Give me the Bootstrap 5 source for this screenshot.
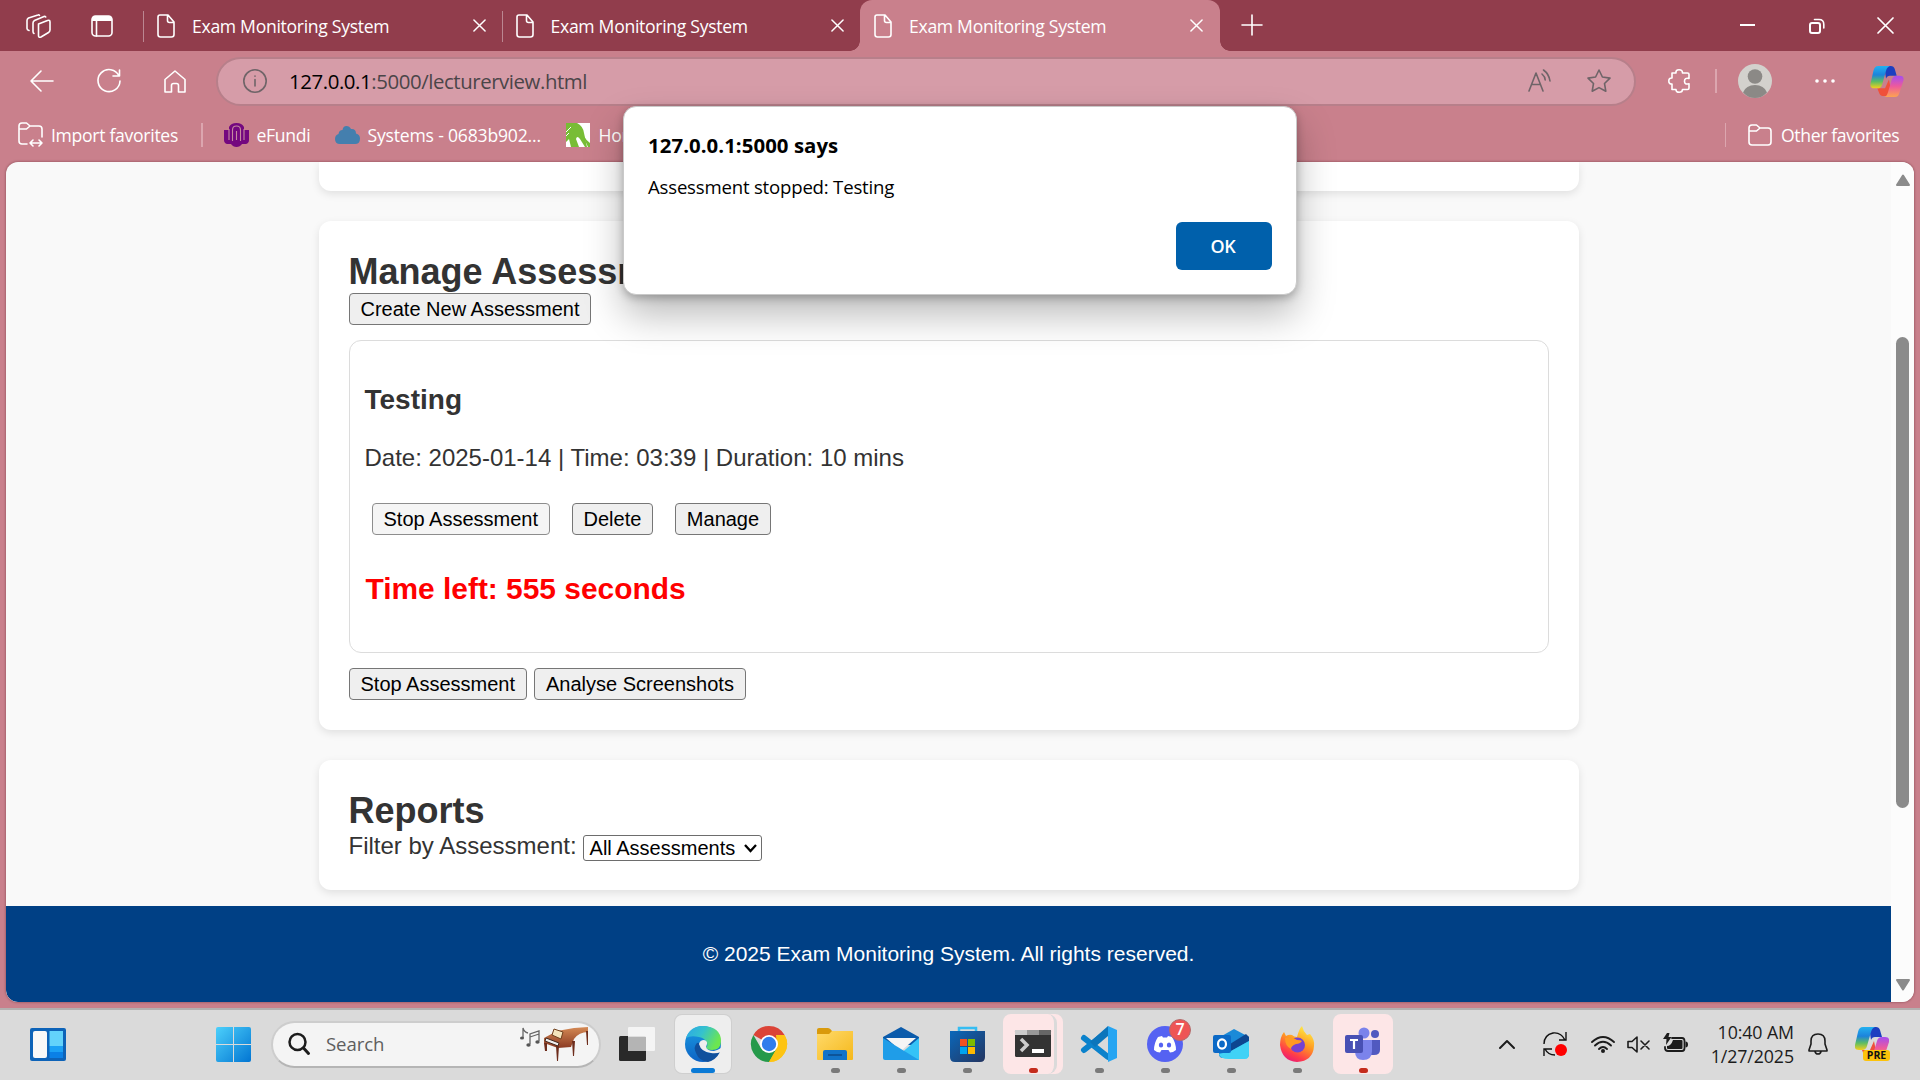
<!DOCTYPE html>
<html lang="en">
<head>
<meta charset="utf-8">
<title>Exam Monitoring System</title>
<link rel="stylesheet" href="https://cdn.jsdelivr.net/npm/bootstrap@5.3.0/dist/css/bootstrap.min.css">
<style>
body{width:1920px;height:1080px;overflow:hidden;background:#c9808c;font-family:"Open Sans","Noto Sans",sans-serif;color:#fff}
svg{display:block;flex:none;overflow:visible}
.ln{fill:none;stroke:currentColor;stroke-width:1.6;stroke-linecap:round;stroke-linejoin:round}
.ui{font-size:17.6px;letter-spacing:-.3px;white-space:nowrap;line-height:24px}
/* tab strip */
.tabstrip{height:51px;background:#913d4c}
.tab-tools{width:143px;padding-left:26px;gap:40px}
.btab{width:358.5px;padding:0 16px 0 13px;border-left:1.5px solid #b78790;border-image:linear-gradient(transparent 23%,#bb8791 23%,#bb8791 81%,transparent 81%) 1}
.btab .ui{margin-left:17px;flex:1}
.btab.current{width:360px;border:0;border-radius:12px 12px 0 0;background:#c9808c;padding:0 17px 0 14px;position:relative}
.btab.current:before,.btab.current:after{content:"";position:absolute;bottom:0;width:10px;height:10px}
.btab.current:before{left:-10px;background:radial-gradient(circle at 0 0,transparent 9.5px,#c9808c 10px)}
.btab.current:after{right:-10px;background:radial-gradient(circle at 100% 0,transparent 9.5px,#c9808c 10px)}
.newtab{margin:-2px 0 0 22px}
.win-tools{padding-right:27px;gap:53px}
/* address row */
.toolrow{height:60px;padding-left:30px}
.navicons{width:186px;gap:43px}
.address{width:1420px;height:49px;border-radius:25px;background:#d69ca8;border:2px solid #b77f8a;color:#6f6468;padding:0 23px 0 25px}
.url{font-size:20.4px;letter-spacing:-.42px;margin-left:22px;color:#4b4548}
.url b{font-weight:400;color:#000}
.vsep{width:1.5px;height:24px;background:#dca6af}
/* favourites */
.favrow{height:51px;padding:0 21px 4px 18px}
/* page */
.viewport{height:840px;margin:0 6px;border-radius:12px;background:#f9f9f9;box-shadow:0 0 2px 1px rgba(120,60,70,.4);font-family:"Liberation Sans",Arial,sans-serif;color:#333;font-size:24px}
.pagecol{width:1885px}
.panel{width:1260px;margin:0 auto 30px;background:#fff;border-radius:12px;box-shadow:0 3px 9px rgba(0,0,0,.1);padding:30px}
.panel.top-end{height:29px;padding:0;border-radius:0 0 12px 12px}
.panel h2{font-size:36px;font-weight:700;line-height:42px;margin:0}
.nbtn{display:inline-flex;align-items:center;justify-content:center;height:32px;font:20px/22px "Liberation Sans",Arial,sans-serif;color:#000;background:#efefef;border:1.5px solid #767676;border-radius:4px;padding:0 11px;white-space:nowrap}
.nbtn.pressed{background:#f5f5f5;border-color:#8d8d8d}
.exam{height:313px;border:1.4px solid #dcdcdc;border-radius:12px;margin:15px 0;padding:15px}
.exam h3{font-size:28px;font-weight:700;line-height:32px;margin:28px 0 0}
.exam p{margin:28px 0 0;line-height:27px}
.exam h4{font-size:29.9px;font-weight:700;line-height:34px;color:#f00;margin:37px 0 0 1px}
.exam-actions{margin:32px 0 0 7px;gap:21.5px}
.pick{height:26px;background:#fff;border:1.5px solid #6d6d6d;border-radius:3px;padding:0 4px 0 6px;font:20px/22px "Liberation Sans",Arial,sans-serif;color:#000;width:179px}
.site-foot{height:96px;background:#004085;color:#fff;font-size:21px;border-radius:0 0 0 12px}
.vscroll{width:23px;background:#fcfcfc;border-radius:0 12px 12px 0;padding:12px 0 11px}
.thumb{width:13px;height:471px;border-radius:7px;background:#8b8b8b;margin-top:151px}
/* alert */
.alertbox{position:absolute;left:623px;top:106px;width:674px;height:189px;background:#fff;border:1px solid #c9c9c9;border-radius:13px;box-shadow:0 20px 38px rgba(0,0,0,.27),0 3px 9px rgba(0,0,0,.25);color:#000;padding:24px 24px 24px 24px}
.alertbox h1{font-size:20.4px;font-weight:700;letter-spacing:.05px;line-height:28px;margin:0}
.alertbox p{font-size:18.6px;letter-spacing:-.2px;line-height:28px;margin:14px 0 0}
.okbtn{width:96px;height:48px;background:#0060ab;color:#fff;border-radius:6px;font-size:18px;font-weight:600;letter-spacing:-.4px;padding-right:2px;margin-top:auto}
/* taskbar */
.taskbar{height:72px;background:#dadada;border-top:2px solid #b3b0b0;margin-top:6px;padding-bottom:2px;color:#1c1c1c}
.searchbox{width:330px;height:47px;border-radius:24px;background:#f4f4f4;border:2px solid #cdcdcd;border-bottom-color:#b5b5b5;padding:0 9px 0 15px}
.searchbox span{margin-left:16px;font-size:18.6px;letter-spacing:-.1px;color:#5e5e5e}
.app{width:66px;height:60px;position:relative}
.app.tile:before{content:"";position:absolute;inset:1px 5px;border-radius:7px;background:#eee;box-shadow:0 0 0 1px #cfcfcf}
.app.pink:before{content:"";position:absolute;inset:0 3px;border-radius:8px;background:#fde6e7}
.app.stack:after{content:"";position:absolute;right:9px;top:0;width:10px;height:60px;border-right:3px solid #dadada;border-radius:0 9px 9px 0}
.app svg{position:relative}
.dot{position:absolute;bottom:1px;left:50%;width:9px;height:5px;margin-left:-4px;border-radius:3px;background:#7a7a7a}
.dot.red{background:#c42b1c}
.dot.act{width:24px;margin-left:-12px;background:#0a7ad6}
.count{position:absolute;left:37px;top:5px;width:22px;height:22px;border-radius:50%;background:#ee5555;border:1px solid #b36b6b;color:#fff;font-size:16px;font-weight:600;line-height:19px;text-align:center}
.clock{font-size:17.8px;line-height:24px;width:92px;letter-spacing:-.1px;white-space:nowrap}
</style>
<script src="https://cdn.jsdelivr.net/npm/bootstrap@5.3.0/dist/js/bootstrap.bundle.min.js"></script>
</head>
<body>
<svg width="0" height="0" class="position-absolute">
<defs>
<symbol id="doc" viewBox="0 0 18 24"><path class="ln" d="M3 1h8l6 7v12.500q0 2.500-2.500 2.500h-11Q1 23 1 20.500V3q0-2 2-2zM10.500 1v5.500q0 2 2 2H17"/></symbol>
<symbol id="ex" viewBox="0 0 14 14"><path class="ln" d="M1 1l12 12M13 1L1 13"/></symbol>
<linearGradient id="cp1" x1="0" y1="0" x2="0" y2="1"><stop offset="0" stop-color="#23b1f0"/><stop offset=".4" stop-color="#1c83dc"/><stop offset=".7" stop-color="#5ebd62"/><stop offset="1" stop-color="#f5d01c"/></linearGradient>
<linearGradient id="cp2" x1="0" y1="0" x2="0" y2="1"><stop offset="0" stop-color="#a44df0"/><stop offset=".5" stop-color="#ee5a9c"/><stop offset="1" stop-color="#fda450"/></linearGradient>
<symbol id="copilot" viewBox="0 0 34 32"><path fill="#1c3ec0" d="M14 0h7q3 0 4 3l2 7h-7q-3 0-4 3z"/><path fill="#f0503a" d="M7 23h8l4-9 2 10-2 7h-5q-4 0-5-3z"/><path fill="url(#cp1)" d="M8 0h12q-3 1-4 5l-4 14q-1 4-5 4H4q-5 0-4-5L3 5q1-5 5-5z"/><path fill="url(#cp2)" d="M27 10h3q5 0 4 5l-4 12q-1 5-5 5H14q3-1 4-5l4-13q1-4 5-4z"/></symbol>
<linearGradient id="blu" x1="0" y1="0" x2="1" y2="1"><stop offset="0" stop-color="#4cd0fb"/><stop offset="1" stop-color="#0275d2"/></linearGradient>
<linearGradient id="edg" x1="0" y1="0" x2="1" y2=".4"><stop offset="0" stop-color="#2ba6e8"/><stop offset=".5" stop-color="#35c2cd"/><stop offset="1" stop-color="#6ce650"/></linearGradient>
<linearGradient id="edl" x1="0" y1="0" x2="0" y2="1"><stop offset="0" stop-color="#1b9de2"/><stop offset="1" stop-color="#0c62c4"/></linearGradient>
<linearGradient id="yel" x1="0" y1="0" x2="1" y2="1"><stop offset="0" stop-color="#ffda6b"/><stop offset="1" stop-color="#f5b81b"/></linearGradient>
<linearGradient id="sto" x1="0" y1="0" x2="1" y2="1"><stop offset="0" stop-color="#0a68bb"/><stop offset="1" stop-color="#243560"/></linearGradient>
<linearGradient id="fox" x1=".8" y1="0" x2=".3" y2="1"><stop offset="0" stop-color="#fff44a"/><stop offset=".45" stop-color="#ff9a22"/><stop offset=".8" stop-color="#ff3b4a"/><stop offset="1" stop-color="#e81a78"/></linearGradient>
<linearGradient id="pia" x1="0" y1="0" x2="0" y2="1"><stop offset="0" stop-color="#d58a55"/><stop offset="1" stop-color="#8b3a22"/></linearGradient>
</defs>
</svg>

<header>
<div class="tabstrip d-flex align-items-center">
  <div class="tab-tools d-flex align-items-center">
    <svg width="25" height="24" viewBox="0 0 25 24"><path class="ln" d="M12.500 10l9-3.500q2.500-.8 2.500 1.500v8q0 1.500-1.500 2.500l-7.500 4.500q-2.500 1-2.500-1.500zM8 19.500q-1-.5-1-2V9q0-1.500 1.500-2.500L18 2.500q1-.4 1.700.5M3 16.500q-2-.5-2-2V6.500Q1 5 2.500 4L12 1q1-.4 1.500.4"/></svg>
    <svg width="22" height="22" viewBox="0 0 22 22"><rect class="ln" x="1" y="1" width="20" height="20" rx="3.500"/><path fill="#fff" d="M1 6V4q0-3 3-3h14q3 0 3 3v2z"/><path class="ln" d="M5.500 6v15"/></svg>
  </div>
  <div class="btab d-flex align-items-center h-100"><svg width="18" height="24"><use href="#doc"/></svg><span class="ui">Exam Monitoring System</span><svg width="13" height="13"><use href="#ex"/></svg></div>
  <div class="btab d-flex align-items-center h-100"><svg width="18" height="24"><use href="#doc"/></svg><span class="ui">Exam Monitoring System</span><svg width="13" height="13"><use href="#ex"/></svg></div>
  <div class="btab current d-flex align-items-center h-100"><svg width="18" height="24"><use href="#doc"/></svg><span class="ui">Exam Monitoring System</span><svg width="13" height="13"><use href="#ex"/></svg></div>
  <svg class="newtab" width="20" height="20" viewBox="0 0 20 20"><path class="ln" d="M10 0v20M0 10h20"/></svg>
  <div class="win-tools d-flex align-items-center ms-auto">
    <svg width="15" height="15" viewBox="0 0 15 15"><path stroke="#fff" stroke-width="2" d="M-1 7h15"/></svg>
    <svg width="16" height="16" viewBox="0 0 16 16"><rect x="1" y="5" width="10" height="10" rx="2" fill="none" stroke="#fff" stroke-width="2"/><path class="ln" d="M5.500 1.500H10q4.800 0 4.800 5V10"/></svg>
    <svg width="15" height="15" viewBox="0 0 14 14"><path class="ln" stroke-width="2" d="M0 0l14 14M14 0L0 14"/></svg>
  </div>
</div>

<div class="toolrow d-flex align-items-center">
  <div class="navicons d-flex align-items-center">
    <svg width="24" height="22" viewBox="0 0 24 22"><path class="ln" d="M11 1L1 11l10 10M1 11h22"/></svg>
    <svg width="24" height="24" viewBox="0 0 24 24"><path class="ln" d="M22 7A11 11 0 1 0 23 12M22.500 1v6H16"/></svg>
    <svg width="22" height="23" viewBox="0 0 22 23"><path class="ln" d="M1 9.500L11 1l10 8.500V22h-6.500v-6.500q0-2-2-2h-3q-2 0-2 2V22H1z"/></svg>
  </div>
  <div class="address d-flex align-items-center">
    <svg width="24" height="24" viewBox="0 0 24 24"><circle class="ln" cx="12" cy="12" r="11.200"/><path class="ln" d="M12 10.500V17M12 7v.3"/></svg>
    <span class="url"><b>127.0.0.1</b>:5000/lecturerview.html</span>
    <div class="d-flex align-items-center ms-auto" style="gap:36px">
      <svg width="23" height="22" viewBox="0 0 23 22"><path class="ln" d="M1 21L8 3l7 18M3.500 14.500h9M14 4q3 2.500 3.200 6M15.500 0q5.500 4 6.500 11"/></svg>
      <svg width="24" height="24" viewBox="0 0 24 24"><path class="ln" d="M12 1l3.400 7 7.600 1.100-5.500 5.400 1.300 7.700L12 18.600l-6.800 3.600 1.300-7.700L1 9.100 8.600 8z"/></svg>
    </div>
  </div>
  <svg style="margin-left:32px" width="22" height="24" viewBox="0 0 22 24"><path class="ln" d="M4 4h4Q7.500.8 11 .8T14.500 4h5Q21 4 21 5.500v4q-4.500-1-4.500 2.700t4.500 2.600V19q0 1.500-1.500 1.500h-5q0 2.700-3.300 2.700T8 20.500H4V15Q.8 15.200.8 12T4 9z"/></svg>
  <div class="vsep" style="margin-left:25px"></div>
  <svg style="margin-left:21px" width="34" height="34" viewBox="0 0 34 34"><circle cx="17" cy="17" r="17" fill="#d3d1cd"/><circle cx="17" cy="12.500" r="7.300" fill="#8b8986"/><path d="M5 28.500q3-7.500 12-7.500t12 7.500Q24 34 17 34T5 28.500z" fill="#8b8986"/></svg>
  <svg style="margin-left:43px" width="20" height="4" viewBox="0 0 20 4"><g fill="#fff"><circle cx="2" cy="2" r="1.800"/><circle cx="10" cy="2" r="1.800"/><circle cx="18" cy="2" r="1.800"/></g></svg>
  <svg style="margin-left:35px" width="34" height="31"><use href="#copilot"/></svg>
</div>

<div class="favrow d-flex align-items-center">
  <svg width="25" height="25" viewBox="0 0 25 25"><path class="ln" d="M9 22H4q-3 0-3-3V4q0-3 3-3h4.500L12 4h9q3 0 3 3v8M1 7h7.500L12 4M12 21h12M15 18l-3 3 3 3M21 18l3 3-3 3"/></svg>
  <span class="ui" style="margin-left:8px;width:150px">Import favorites</span>
  <div class="vsep"></div>
  <svg style="margin-left:21px" width="25" height="24" viewBox="0 0 25 24"><path fill="#74087f" d="M0 7h5V4q2-4 7.500-4T20 4v3h5v10q0 3-3 4h-4q-2 3-5.500 3T7 21H3q-3-1-3-4z"/><path d="M5 6v11M20 6v11M8.500 18V7q0-4 4-4t4 4v11M12.500 8v9" fill="none" stroke="#c58a9f" stroke-width="1.100"/></svg>
  <span class="ui" style="margin-left:8px;width:78px">eFundi</span>
  <svg width="25" height="18" viewBox="0 0 25 18"><path fill="#447fae" d="M5 18q-5 0-5-5 0-4 3.500-5 .5-4 4-4Q8 0 11.500 0q3 0 4.500 3 5-.5 5 4.500 4 1 4 5 0 5.500-5 5.500z"/></svg>
  <span class="ui" style="margin-left:8px;width:198px;letter-spacing:-.2px">Systems - 0683b902...</span>
  <svg width="24" height="24" viewBox="0 0 24 24"><path fill="#fff" d="M0 0h24v24H0z"/><path fill="#78bd35" d="M0 0h11q6 3 7 10l3 14h-2l-5-8q-3-4-4 0l3 8H5L3 16 0 19z"/><path fill="#78bd35" d="M17 12q2 6 5 12h2v-4q-4-3-7-8z"/><path stroke="#fff" d="M0 9l5-5M0 13l3-3"/></svg>
  <span class="ui" style="margin-left:9px">Home</span>
  <div class="vsep ms-auto"></div>
  <svg style="margin-left:22px" width="24" height="22" viewBox="0 0 24 22"><path class="ln" d="M4 1h4.500L12 4h8q3 0 3 3v11q0 3-3 3H4q-3 0-3-3V4q0-3 3-3zM1 7h7.500L12 4"/></svg>
  <span class="ui" style="margin-left:9px;width:118px;letter-spacing:-.35px">Other favorites</span>
</div>
</header>

<div class="viewport d-flex overflow-hidden">
  <div class="pagecol d-flex flex-column">
    <section class="panel top-end"></section>
    <section class="panel">
      <h2>Manage Assessments</h2>
      <div class="d-flex"><button class="nbtn">Create New Assessment</button></div>
      <div class="exam">
        <h3>Testing</h3>
        <p>Date: 2025-01-14 | Time: 03:39 | Duration: 10 mins</p>
        <div class="exam-actions d-flex"><button class="nbtn pressed">Stop Assessment</button><button class="nbtn">Delete</button><button class="nbtn">Manage</button></div>
        <h4>Time left: 555 seconds</h4>
      </div>
      <div class="d-flex" style="gap:7px"><button class="nbtn">Stop Assessment</button><button class="nbtn">Analyse Screenshots</button></div>
    </section>
    <section class="panel mb-0">
      <h2>Reports</h2>
      <div class="d-flex align-items-center" style="height:28px;gap:6px"><span>Filter by Assessment:</span>
        <div class="pick d-flex align-items-center justify-content-between mt-1"><span>All Assessments</span><svg width="13" height="9" viewBox="0 0 13 9"><path d="M1 1l5.500 6L12 1" fill="none" stroke="#000" stroke-width="2.300"/></svg></div></div>
    </section>
    <footer class="site-foot mt-auto d-flex align-items-center justify-content-center">© 2025 Exam Monitoring System. All rights reserved.</footer>
  </div>
  <div class="vscroll d-flex flex-column align-items-center">
    <svg width="14" height="12" viewBox="0 0 14 12"><path fill="#8b8b8b" stroke="#8b8b8b" stroke-width="2" stroke-linejoin="round" d="M7 1.500L13 11H1z"/></svg>
    <div class="thumb"></div>
    <svg class="mt-auto" width="14" height="12" viewBox="0 0 14 12"><path fill="#8b8b8b" stroke="#8b8b8b" stroke-width="2" stroke-linejoin="round" d="M7 10.500L13 1H1z"/></svg>
  </div>
</div>

<div class="alertbox d-flex flex-column">
  <h1>127.0.0.1:5000 says</h1>
  <p>Assessment stopped: Testing</p>
  <div class="okbtn d-flex align-items-center justify-content-center align-self-end">OK</div>
</div>

<div class="taskbar d-flex align-items-center">
  <svg style="margin-left:30px" width="36" height="33" viewBox="0 0 36 33"><rect width="36" height="33" rx="2" fill="#0d63b8"/><rect x="3" y="3" width="14" height="27" rx="2" fill="#f8f8f8"/><path fill="#63d3fb" d="M19.500 3H33v15H19.500z"/><path fill="#1ba1f5" d="M19.500 18H33v6H19.500z"/><path fill="#0a80e6" d="M19.500 24H33v6H19.500z"/></svg>
  <svg style="margin-left:150px" width="35" height="35" viewBox="0 0 35 35"><path fill="url(#blu)" d="M2 0h15v17H0V2q0-2 2-2zM18 0h15q2 0 2 2v15H18zM0 18h17v17H2q-2 0-2-2zM18 18h17v15q0 2-2 2H18z"/></svg>
  <div class="searchbox d-flex align-items-center flex-shrink-0" style="margin-left:20px">
    <svg width="22" height="22" viewBox="0 0 22 22"><circle cx="9.500" cy="9" r="8" fill="none" stroke="#1c1c1c" stroke-width="2.500"/><path stroke="#1c1c1c" stroke-width="3" stroke-linecap="round" d="M15.500 15l5 5.500"/></svg>
    <span>Search</span>
    <svg class="ms-auto" width="70" height="34" viewBox="0 0 70 34"><g fill="none" stroke="#666" stroke-width="1.300"><path d="M3 11V1q1 4 5 5M10 17V7l9-3v10M10 10l9-3"/></g><g fill="#555"><ellipse cx="2" cy="11" rx="2" ry="1.600"/><ellipse cx="8.500" cy="18" rx="2.200" ry="1.700"/><ellipse cx="17.500" cy="15" rx="2.200" ry="1.700"/></g><path fill="url(#pia)" d="M24 11L37 4l17-3 14-1v5q-9 0-14 7l-3 8-13 1-14-5z"/><path fill="#6d2c1b" d="M36 19h3l-1 15h-1zM52 14h3l-1 15h-1zM24 16h3v8h-2zM66 4h2v14h-1z"/><path fill="#f4e4bb" stroke="#70401d" d="M34 2l9 3-2 7-9-4z"/><path fill="#eee" stroke="#43261c" d="M26 11l13 5-1 3-13-5z"/></svg>
  </div>
  <div class="d-flex align-items-center flex-shrink-0" style="margin-left:3px">
    <div class="app d-flex align-items-center justify-content-center"><svg width="36" height="34" viewBox="0 0 36 34"><rect y="9" width="27" height="25" rx="1.500" fill="#292929"/><rect x="9" width="27" height="24" rx="1" fill="#f7f7f7" opacity=".88"/><path fill="#b4b4b4" d="M9 10h18v14H9z"/></svg></div>
    <div class="app tile d-flex align-items-center justify-content-center"><svg width="36" height="36" viewBox="0 0 36 36"><circle cx="18" cy="18" r="18" fill="url(#edl)"/><path fill="url(#edg)" d="M1 12Q5 0 18 0q18 1 18 15 0 9-9 9-6 0-6-3 2-1 1-4-2-5-8-6Q6 9 1 12z"/><path fill="#10509d" d="M12 17q-4 4-1 10 3 8 12 9 8-2 12-10-2 1-6 1-10 1-13-7-1-4-4-3z"/><path fill="#eee" d="M14 18q1-4 5-4 5 1 2 7 1 4 8 4 4-1 7-3v4q-5 2-10 1-10-1-12-9z"/></svg><i class="dot act"></i></div>
    <div class="app d-flex align-items-center justify-content-center"><svg width="36" height="36" viewBox="0 0 36 36"><path fill="#db4337" d="M18 18L2.400 9A18 18 0 0 1 33.600 9z"/><path fill="#fdc413" d="M18 18L33.600 9A18 18 0 0 1 18 36z"/><path fill="#25994a" d="M18 36A18 18 0 0 1 2.400 9l7.800 13.500Q14 29 25.800 22.500z"/><path fill="#fdc413" d="M33.600 9A18 18 0 0 1 18 36l8-14-1-13z"/><circle cx="18" cy="18" r="9" fill="#fff"/><circle cx="18" cy="18" r="7.200" fill="#2f7cec"/></svg></div>
    <div class="app d-flex align-items-center justify-content-center"><svg width="36" height="34" viewBox="0 0 36 34"><path fill="#d99a0c" d="M0 3q0-2 2-2h9q2 0 4 3h20v4H0z"/><path fill="url(#yel)" d="M0 7h12l3-3h21v28q0 1-1 1H1q-1 0-1-1z"/><path fill="#1173c8" d="M6 33V25q0-2 2-2h20q2 0 2 2v8z"/><path stroke="#0c4a8a" stroke-width="1.500" d="M11 28h14"/></svg><i class="dot"></i></div>
    <div class="app d-flex align-items-center justify-content-center"><svg width="36" height="34" viewBox="0 0 36 34"><path fill="#0b5bab" d="M0 10L18 0l18 10v8H0z"/><path fill="#f5f5f5" d="M3 11h30L18 24z"/><path fill="#35c3f7" d="M36 11v22H10z"/><path fill="#1f9de8" d="M0 11l36 22H2q-2 0-2-2z"/></svg><i class="dot"></i></div>
    <div class="app d-flex align-items-center justify-content-center"><svg width="35" height="35" viewBox="0 0 35 35"><path d="M9 7V1h17v6" fill="none" stroke="#35bdf2" stroke-width="2.500"/><path fill="url(#sto)" d="M0 4h35v26q0 5-5 5H5q-5 0-5-5z"/><path fill="#f25022" d="M10 12h7v7h-7z"/><path fill="#7fba00" d="M18 12h7v7h-7z"/><path fill="#00a4ef" d="M10 20h7v7h-7z"/><path fill="#ffb900" d="M18 20h7v7h-7z"/></svg><i class="dot"></i></div>
    <div class="app pink stack d-flex align-items-center justify-content-center"><svg width="36" height="28" viewBox="0 0 36 28"><rect width="36" height="27" rx="1.500" fill="#333"/><path fill="#ccc" d="M0 0h12v5H0z"/><path fill="#999" d="M12 0h12v5H12z"/><path fill="#666" d="M24 0h12v5H24z"/><path d="M6 9l6 6-6 6" fill="none" stroke="#ccc" stroke-width="3.500"/><path fill="#fff" d="M17 19h12v4H17z"/></svg><i class="dot red"></i></div>
    <div class="app d-flex align-items-center justify-content-center"><svg width="36" height="36" viewBox="0 0 36 36"><path d="M3 12l24 19M3 24L27 5" stroke="#0b82cc" stroke-width="6" stroke-linecap="round"/><path fill="#0c75bb" d="M27 0v10L14 21l-5-5z"/><path fill="#26a5f2" d="M27 0l9 4v28l-9 4z"/></svg><i class="dot"></i></div>
    <div class="app d-flex align-items-center justify-content-center"><svg width="36" height="36" viewBox="0 0 36 36"><circle cx="18" cy="18" r="18" fill="#5562f2"/><path fill="#fff" d="M11 11l4-1 1 1.500h4L21 10l4 1q4 6 4 13-3 2.500-6 2.500l-1.500-2.500h-7L13 26.500Q10 26.500 7 24q0-7 4-13z"/><ellipse cx="14" cy="19" rx="2.200" ry="2.500" fill="#5562f2"/><ellipse cx="22" cy="19" rx="2.200" ry="2.500" fill="#5562f2"/></svg><span class="count">7</span><i class="dot"></i></div>
    <div class="app d-flex align-items-center justify-content-center"><svg width="36" height="30" viewBox="0 0 36 30"><path fill="#1a8ad8" d="M7 8L21 0l15 8v17q0 4-4 4H10q-4 0-4-4z"/><path fill="#0d4690" d="M17 15L33 5l3 3v4L18 22z"/><path fill="#40d2f6" d="M36 12v13q0 5-4 5H16q-9 0-10-5l12-3z"/><rect y="6" width="18" height="18" rx="2" fill="#0b69c6"/><ellipse cx="9" cy="15" rx="4" ry="4.700" fill="none" stroke="#fff" stroke-width="2.200"/></svg><i class="dot"></i></div>
    <div class="app d-flex align-items-center justify-content-center"><svg width="35" height="36" viewBox="0 0 35 36"><path fill="url(#fox)" d="M0 19Q0 11 4 6l2 4q3-2 6-1 2 2 5 2 2-8 5-11 1 5 5 9l3-1q5 6 4 12-1 15-17 16Q2 35 0 19z"/><circle cx="17.500" cy="19" r="7.500" fill="#7542d0"/><path fill="#ff9a22" d="M5 12q7-2 12 2 4 0 5 1-2 3-6 3-5 2-5 5-6-3-6-11z"/></svg><i class="dot"></i></div>
    <div class="app pink d-flex align-items-center justify-content-center"><svg width="36" height="32" viewBox="0 0 36 32"><circle cx="30" cy="6" r="4" fill="#5159c0"/><path fill="#5159c0" d="M26 12h9v10q0 5-6 5h-4z"/><circle cx="19" cy="5" r="5.500" fill="#7b83eb"/><path fill="#7b83eb" d="M10 12h17v11q0 9-9 9-8 0-8-9z"/><rect y="7" width="18" height="18" rx="2" fill="#4850b4"/><path d="M5 12h8M9 12v9" stroke="#fff" stroke-width="2.200"/></svg><i class="dot red"></i></div>
  </div>
  <div class="d-flex align-items-center ms-auto" style="padding-right:31px">
    <svg width="16" height="9" viewBox="0 0 16 9"><path class="ln" style="stroke-width:2" d="M1 8l7-7 7 7"/></svg>
    <svg style="margin-left:28px" width="24" height="24" viewBox="0 0 24 24"><path d="M1 12Q1 3 10 1q8-1 12 7M23 0v8h-7M1 24v-7h8M2 17q3 6 10 6" fill="none" stroke="#111" stroke-width="1.400"/><circle cx="18" cy="18" r="6" fill="#f00"/></svg>
    <svg style="margin-left:24px" width="24" height="17" viewBox="0 0 24 17"><path class="ln" style="stroke-width:1.900" d="M1 6q11-10 22 0M4 9.500q8-7.500 16 0M8 13q4-4 8 0"/><circle cx="12" cy="15" r="2" fill="#1c1c1c"/></svg>
    <svg style="margin-left:12px" width="23" height="17" viewBox="0 0 23 17"><path class="ln" d="M1 5.500h4L10 1v15l-5-4.500H1zM14 5l8 8M22 5l-8 8"/></svg>
    <svg style="margin-left:13px" width="25" height="19" viewBox="0 0 25 19"><path class="ln" style="stroke-width:1.800" d="M9 3h10q2.500 0 2.500 3v7q0 3-2.500 3H5q-3 0-3-3v-1"/><path fill="#1c1c1c" d="M10 5h8.500q1 0 1 1v7q0 1-1 1H5q-1 0-1-1v-2q4 0 6-6zM22.500 6.500q2.500 0 2.500 3t-2.500 3zM4 -2h2.500L5.500 2h3L3 10l.5-6H0z"/></svg>
    <div class="clock text-end" style="margin-left:14px">10:40 AM<br>1/27/2025</div>
    <svg style="margin-left:14px" width="20" height="22" viewBox="0 0 20 22"><path class="ln" d="M3 11V8q0-7 7-7t7 7v3l2 6v1H1v-1zM7 18.500q.5 2.500 3 2.500t3-2.500"/></svg>
    <div class="position-relative" style="margin-left:27px"><svg width="34" height="35" viewBox="0 0 34 35"><use href="#copilot" width="34" height="32"/><rect x="8" y="23" width="27" height="11" rx="3" fill="#fcc30b"/><text x="21.500" y="32" text-anchor="middle" font-size="10.500" font-weight="700" fill="#111">PRE</text></svg></div>
  </div>
</div>
</body>
</html>
